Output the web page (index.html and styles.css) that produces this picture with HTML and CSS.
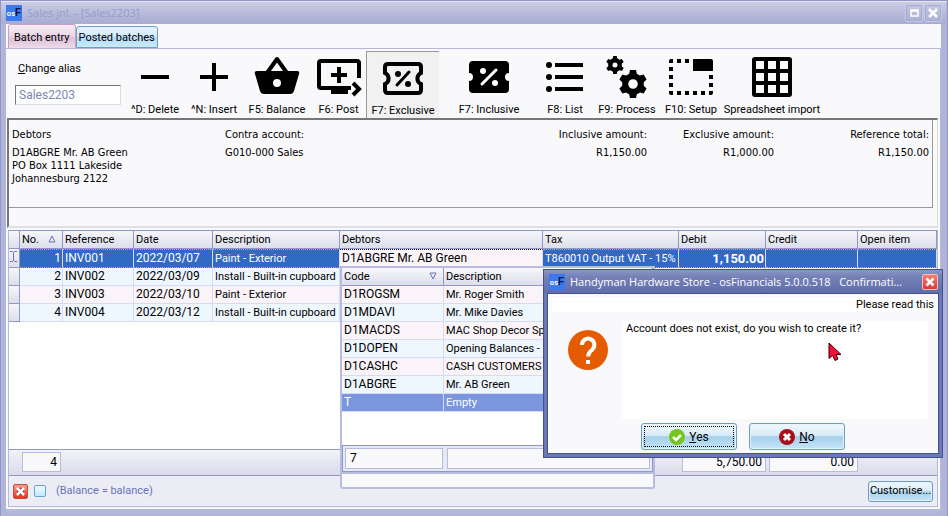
FILE: index.html
```html
<!DOCTYPE html>
<html lang="en">
<head>
<meta charset="utf-8">
<title>Sales jnl. - [Sales2203]</title>
<link rel="stylesheet" href="styles.css">
</head>
<body>
<div class="window">
  <header class="titlebar">
    <span class="logo" aria-hidden="true">os<b>F</b></span>
    <h1 class="title">Sales jnl. - [Sales2203]</h1>
    <button class="winbtn" type="button" aria-label="Maximise"><svg width="16" height="16"><path d="M5 5h7v6H5zM5 6h7" fill="none" stroke="#fff" stroke-width="1.500"/></svg></button>
    <button class="winbtn" type="button" aria-label="Close"><svg width="16" height="16"><path d="M4 4l8 8M12 4l-8 8" stroke="#fff" stroke-width="2.500"/></svg></button>
  </header>
  <nav class="tabs">
    <button class="tab tab-active" type="button">Batch entry</button>
    <button class="tab" type="button">Posted batches</button>
  </nav>
  <main class="sheet">
    <div class="toolbar">
      <div class="alias">
        <label for="alias"><u>C</u>hange alias</label>
        <input id="alias" type="text" value="Sales2203">
      </div>
      <button class="tool w-delete" type="button"><svg width="48" height="42"><path d="M10 19h28v4H10z"/></svg>^D: Delete</button>
      <button class="tool w-insert" type="button"><svg width="48" height="42"><path d="M10 19h28v4H10zM22 7h4v28h-4z"/></svg>^N: Insert</button>
      <button class="tool w-balance" type="button"><svg width="48" height="42"><path d="M14 17L24 3l10 14" fill="none" stroke="#000" stroke-width="4" stroke-linejoin="round"/><path fill-rule="evenodd" d="M4 15h40q3 0 2 3l-5 17q-1 3-4 3H11q-3 0-4-3L2 18q-1-3 2-3zM24 23a4 4 0 1 0 0 8a4 4 0 0 0 0-8z"/></svg>F5: Balance</button>
      <button class="tool w-post" type="button"><svg width="48" height="42"><path d="M44 22V7q0-2-2-2H6q-2 0-2 2v23q0 2 2 2h30M24 11v16M16 19h16" fill="none" stroke="#000" stroke-width="4"/><path d="M16 32h17v6H16z"/><path d="M38 27l6 6-6 6" fill="none" stroke="#000" stroke-width="4"/></svg>F6: Post</button>
      <button class="tool tool-on w-exclusive" type="button"><svg width="48" height="42"><path d="M9 7h30q3 0 3 3v6a6 6 0 0 0 0 11v6q0 3-3 3H9q-3 0-3-3v-6a6 6 0 0 0 0-11v-6q0-3 3-3z" fill="none" stroke="#000" stroke-width="4"/><circle cx="19" cy="17" r="3"/><circle cx="29" cy="27" r="3"/><path d="M30 15L18 28" stroke="#000" stroke-width="3" stroke-linecap="round"/></svg>F7: Exclusive</button>
      <button class="tool w-inclusive" type="button"><svg width="48" height="42"><path d="M8 5h32q4 0 4 4v8a4 4 0 0 0 0 8v8q0 4-4 4H8q-4 0-4-4v-8a4 4 0 0 0 0-8V9q0-4 4-4z"/><circle cx="18" cy="15" r="3" fill="#fff"/><circle cx="30" cy="27" r="3" fill="#fff"/><path d="M31 14L17 28" stroke="#fff" stroke-width="3" stroke-linecap="round"/></svg>F7: Inclusive</button>
      <button class="tool w-list" type="button"><svg width="48" height="42"><circle cx="8" cy="9" r="3"/><circle cx="8" cy="21" r="3"/><circle cx="8" cy="33" r="3"/><path d="M14 7h28v4H14zM14 19h28v4H14zM14 31h28v4H14z"/></svg>F8: List</button>
      <button class="tool w-process" type="button"><svg width="48" height="42">
        <g transform="translate(12 9)"><circle r="4.700" fill="none" stroke="#000" stroke-width="4.400"/><path d="M-2.200-6l.4-3h3.600l.4 3zM-2.200 6l.4 3h3.600l.4-3z"/><path transform="rotate(60)" d="M-2.200-6l.4-3h3.600l.4 3zM-2.200 6l.4 3h3.600l.4-3z"/><path transform="rotate(120)" d="M-2.200-6l.4-3h3.600l.4 3zM-2.200 6l.4 3h3.600l.4-3z"/></g>
        <g transform="translate(30 28)"><circle r="7.800" fill="none" stroke="#000" stroke-width="6"/><path d="M-4-9.500l1-4.500h6l1 4.500zM-4 9.500l1 4.500h6l1-4.500z"/><path transform="rotate(60)" d="M-4-9.500l1-4.500h6l1 4.500zM-4 9.500l1 4.500h6l1-4.500z"/><path transform="rotate(120)" d="M-4-9.500l1-4.500h6l1 4.500zM-4 9.500l1 4.500h6l1-4.500z"/></g></svg>F9: Process</button>
      <button class="tool w-setup" type="button"><svg width="48" height="42"><path d="M2 5q0-2 2-2h2v4H2zM10 3h4v4h-4zM18 3h4v4h-4zM26 3h18q2 0 2 2v10H26zM2 11h4v4H2zM2 19h4v4H2zM2 27h4v4H2zM42 19h4v4h-4zM42 27h4v4h-4zM2 35h4v4H4q-2 0-2-2zM10 35h4v4h-4zM18 35h4v4h-4zM26 35h4v4h-4zM34 35h4v4h-4zM42 35h4v2q0 2-2 2h-2z"/></svg>F10: Setup</button>
      <button class="tool w-import" type="button"><svg width="48" height="42"><path fill-rule="evenodd" d="M7 1h34q3 0 3 3v34q0 3-3 3H7q-3 0-3-3V4q0-3 3-3zM8 5v8h8V5zM20 5v8h8V5zM32 5v8h8V5zM8 17v8h8v-8zM20 17v8h8v-8zM32 17v8h8v-8zM8 29v8h8v-8zM20 29v8h8v-8zM32 29v8h8v-8z"/></svg>Spreadsheet import</button>
    </div>

    <section class="summary">
      <div class="summary-in">
        <div class="who">
          <p class="cap">Debtors</p>
          <p>D1ABGRE Mr. AB Green<br>PO Box 1111 Lakeside<br>Johannesburg 2122</p>
        </div>
        <div class="contra"><p class="cap">Contra account:</p><p>G010-000 Sales</p></div>
        <div class="amount"><p class="cap">Inclusive amount:</p><p>R1,150.00</p></div>
        <div class="amount excl"><p class="cap">Exclusive amount:</p><p>R1,000.00</p></div>
        <div class="amount ref"><p class="cap">Reference total:</p><p>R1,150.00</p></div>
      </div>
    </section>

    <section class="batch">
      <div class="gridwrap">
        <table class="grid">
          <colgroup><col class="c-ind"><col class="c-no"><col class="c-ref"><col class="c-date"><col class="c-desc"><col class="c-debt"><col class="c-tax"><col class="c-debit"><col class="c-credit"><col></colgroup>
          <thead><tr><th></th><th>No. <svg class="sort" width="8" height="8"><path d="M4 1L7 7H1z" fill="none" stroke="#6674b4"/></svg></th><th>Reference</th><th>Date</th><th>Description</th><th>Debtors</th><th>Tax</th><th>Debit</th><th>Credit</th><th>Open item</th></tr></thead>
          <tbody>
            <tr class="current"><th class="cursor"><svg width="7" height="11"><path d="M0 .5h2.500l1 1 1-1H7M3.500 1v9M0 10.500h2.500l1-1 1 1H7" fill="none" stroke="#6674b4"/></svg></th><td class="num">1</td><td class="code">INV001</td><td class="code">2022/03/07</td><td>Paint - Exterior</td><td class="edit"><input type="text" aria-label="Debtors" value="D1ABGRE Mr. AB Green"></td><td>T860010 Output VAT - 15%</td><td class="num strong">1,150.00</td><td></td><td></td></tr>
            <tr class="blue"><th></th><td class="num">2</td><td class="code">INV002</td><td class="code">2022/03/09</td><td>Install - Built-in cupboard</td><td></td><td></td><td></td><td></td><td></td></tr>
            <tr class="pink"><th></th><td class="num">3</td><td class="code">INV003</td><td class="code">2022/03/10</td><td>Paint - Exterior</td><td></td><td></td><td></td><td></td><td></td></tr>
            <tr class="blue"><th></th><td class="num">4</td><td class="code">INV004</td><td class="code">2022/03/12</td><td>Install - Built-in cupboard</td><td></td><td></td><td></td><td></td><td></td></tr>
          </tbody>
        </table>
        <div class="lookup">
          <div class="lookup-main">
            <table class="grid picks">
              <colgroup><col class="c-code"><col></colgroup>
              <thead><tr><th>Code <svg class="sort" width="8" height="8"><path d="M1 1H7L4 7z" fill="none" stroke="#6674b4"/></svg></th><th>Description</th></tr></thead>
              <tbody>
                <tr class="pink"><td class="code">D1ROGSM</td><td>Mr. Roger Smith</td></tr>
                <tr class="blue"><td class="code">D1MDAVI</td><td>Mr. Mike Davies</td></tr>
                <tr class="pink"><td class="code">D1MACDS</td><td>MAC Shop Decor Sp</td></tr>
                <tr class="blue"><td class="code">D1DOPEN</td><td>Opening Balances -</td></tr>
                <tr class="pink"><td class="code">D1CASHC</td><td>CASH CUSTOMERS</td></tr>
                <tr class="blue"><td class="code">D1ABGRE</td><td>Mr. AB Green</td></tr>
                <tr class="picked"><td class="code">T</td><td>Empty</td></tr>
              </tbody>
            </table>
            <div class="lookup-foot"><span class="box count">7</span><span class="box rest"></span></div>
          </div>
          <div class="lookup-pane"></div>
        </div>
      </div>
      <div class="totals"><span class="box t-no">4</span><span class="box t-debit">5,750.00</span><span class="box t-credit">0.00</span></div>
      <div class="status">
        <button class="clear" type="button" aria-label="Clear filter"><svg width="13" height="13"><path d="M4 4l5 5M9 4l-5 5" stroke="#8d3020" stroke-width="4"/><path d="M3 3l7 7M10 3l-7 7" stroke="#fff" stroke-width="2.500"/></svg></button>
        <input class="tick" id="filter" type="checkbox">
        <label for="filter">(Balance = balance)</label>
        <button class="glass customise" type="button">Customise...</button>
      </div>
    </section>
  </main>
</div>

<div class="dialog" role="dialog" aria-labelledby="dlg-title">
  <div class="dlg-bar">
    <span class="logo" aria-hidden="true">os<b>F</b></span>
    <h2 class="dlg-title" id="dlg-title">Handyman Hardware Store - osFinancials 5.0.0.518 &nbsp; Confirmati...</h2>
    <button class="dlg-close" type="button" aria-label="Close"><svg width="14" height="14"><path d="M3.500 3.500l7 7M10.500 3.500l-7 7" stroke="#fff" stroke-width="2.500"/></svg></button>
  </div>
  <div class="dlg-body">
    <p class="notice">Please read this</p>
    <div class="dlg-main">
      <svg class="question" width="40" height="40"><circle cx="20" cy="20" r="20" fill="#e55c00"/><path d="M14 15a6.200 6.200 0 1 1 10.500 4.300C22 22 20.200 22.500 20.200 26.500" fill="none" stroke="#fff" stroke-width="4"/><path d="M18 30h4v4h-4z" fill="#fff"/></svg>
      <p class="memo">Account does not exist, do you wish to create it?</p>
    </div>
    <div class="dlg-actions">
      <button class="glass focus" type="button"><svg width="16" height="16"><circle cx="8" cy="8" r="8" fill="#76c51c"/><path d="M4 8l3 3 5-5" fill="none" stroke="#fff" stroke-width="2.500"/></svg><span><u>Y</u>es</span></button>
      <button class="glass" type="button"><svg width="16" height="16"><circle cx="8" cy="8" r="8" fill="#a80f18"/><path d="M5 5l6 6M11 5l-6 6" stroke="#fff" stroke-width="3"/></svg><span><u>N</u>o</span></button>
    </div>
  </div>
</div>
<svg class="pointer" width="14" height="20"><path d="M1 1v15.500l3.500-3 2.500 5 3-1.500-2-4.500h5z" fill="#f5103c" stroke="#300" stroke-width="1"/></svg>
</body>
</html>
```
FILE: styles.css
```css
* { box-sizing: border-box; }
body { margin: 0; font: 11px/14px Roboto, "Liberation Sans", sans-serif; color: #000; }
button, input { font: inherit; color: inherit; margin: 0; padding: 0; border: 0; background: none; }
h1, h2, p { margin: 0; font-weight: normal; }
button svg { display: block; }

.window { display: flex; flex-direction: column; min-height: 100vh; padding: 0 6px 3px 5px; background: #b0b4d8; border: 1px solid #8f96c8; border-width: 1px 1px 0; box-shadow: inset 0 1px #e8eaf6; }
.titlebar { display: flex; align-items: center; height: 23px; gap: 3px; margin: 0 -5px; padding: 0 5px; background: linear-gradient(#cdd0e4, #c0c3dd 30%, #b0b4d6 75%, #a8acd2); box-shadow: inset 0 1px #e4e6f3; }
.title { flex: 1; margin-left: 2px; font: 11px/16px "Open Sans", sans-serif; color: #949cc8; }
.logo { flex: none; width: 16px; height: 16px; background: #3b79f0; color: #fff; font: bold 7px/16px "Liberation Sans", sans-serif; text-align: center; white-space: nowrap; overflow: hidden; }
.logo b { color: #0a1238; font-size: 10px; }
.winbtn { width: 16px; height: 16px; border-radius: 2px; box-shadow: inset 0 0 0 1px #a4aad4, 0 0 0 1px #c8cbe4; }

.tabs { display: flex; align-items: flex-end; height: 24px; padding-left: 2px; background: #f9f9fc; }
.tab { height: 22px; padding: 2px 2px 0; border: 1px solid #6a9fce; border-radius: 3px 3px 0 0; background: linear-gradient(#e6f4fd, #d2ebfb 45%, #b4dbf5 55%, #c8eafc); }
.tab-active { height: 24px; padding: 2px 5px 0; border-color: #c8a0c4; border-bottom: 0; background: linear-gradient(#f7edf5, #ead6e6 45%, #dcc0d8 60%, #ecdcea); }

.sheet { flex: 1; display: flex; flex-direction: column; padding: 1px 2px 2px 1px; background: #f9f9fc; border: 1px solid #b4b8da; border-width: 1px 1px 4px 0; }
.toolbar { display: flex; align-items: stretch; height: 68px; padding-top: 1px; }
.alias { display: flex; flex-direction: column; width: 118px; padding: 11px 0 0 8px; }
.alias label { padding-left: 3px; }
.alias input { width: 106px; height: 20px; margin-top: 9px; padding: 0 3px; background: #fff; border: 1px solid; border-color: #777 #ddd #ddd #777; color: #8088b4; font-size: 12px; }
.tool { display: flex; flex-direction: column; align-items: center; gap: 5px; padding-top: 5px; white-space: nowrap; }
.tool-on { border-left: 1px solid #999; border-top: 1px solid #999; background: #f1f1f2; }
.w-delete { width: 60px; } .w-insert { width: 58px; } .w-balance { width: 68px; } .w-post { width: 55px; }
.w-exclusive { width: 73px; } .w-inclusive { width: 100px; } .w-list { width: 52px; } .w-process { width: 72px; }
.w-setup { width: 56px; } .w-import { width: 106px; }

.summary { height: 110px; border: 2px solid #777; border-right: 1px solid #ddd; border-bottom: 2px solid #e0e0e4; font: 11px/13px "DejaVu Sans Condensed", sans-serif; }
.summary-in { display: flex; height: 88px; margin-right: 4px; padding: 8px 3px 0; border-bottom: 1px solid #999; border-right: 1px solid #999; }
.cap { margin-bottom: 5px; }
.who { width: 213px; }
.contra { width: 200px; }
.amount { flex: 1; text-align: right; }
.excl { flex: 0 0 127px; }
.ref { flex: 0 0 155px; }

.batch { flex: 1; display: flex; flex-direction: column; margin: 2px 0 0 1px; border: 1px solid #b4b8dc; border-top-color: #9098c8; background: #ececf5; }
.gridwrap { flex: 1; position: relative; background: #fff; }
.grid { width: 100%; border-collapse: separate; border-spacing: 0; table-layout: fixed; line-height: 17px; }
.grid th, .grid td { height: 18px; padding: 0 0 0 2px; overflow: hidden; white-space: nowrap; text-align: left; font-weight: normal; border-right: 1px solid #d6daf2; border-bottom: 1px solid #d6daf2; }
.grid th { background: linear-gradient(#f6f6fa, #dcdeea); border-color: #9098c8; }
.grid .cursor { padding-left: 1px; }
.grid .code { font-size: 12px; }
.grid .num { text-align: right; padding-right: 1px; font-size: 12px; }
.c-ind { width: 11px; } .c-no { width: 43px; } .c-ref { width: 71px; } .c-date { width: 79px; } .c-desc { width: 127px; }
.c-debt { width: 203px; } .c-tax { width: 136px; } .c-debit { width: 87px; } .c-credit { width: 92px; } .c-code { width: 102px; }
.sort { float: right; margin: 4px 6px 0 0; }
.blue td { background: #eef6fe; }
.pink td { background: #faf4f8; }
.current td { background: #316ac5; color: #fff; border-top: 1px dotted #e8a040; border-bottom: 1px dotted #e8a040; }
.grid .current .edit { padding: 0; background: #faf4f8; color: #000; border-top-color: #000; }
.edit input { display: block; width: 100%; height: 17px; padding-left: 2px; outline: 0; font-size: 12px; }
.grid .strong { font-weight: bold; font-size: 13px; }
.picked td { background: #7b96de; color: #fff; }

.lookup { position: absolute; left: 331px; top: 35px; width: 315px; }
.lookup-main { display: flex; flex-direction: column; height: 208px; border: 2px solid #b8bcdf; background: #fff; }
.lookup-foot { display: flex; gap: 4px; margin-top: auto; height: 27px; padding: 2px; border: 1px solid #9098c8; background: #e6e8f2; }
.box { border: 1px solid #b8bcdc; background: #f9f9fc; font-size: 12px; line-height: 19px; }
.count { width: 98px; padding-left: 4px; }
.rest { flex: 1; }
.lookup-pane { height: 15px; border: 2px solid #b8bcdf; border-top: 0; border-radius: 0 0 3px 3px; background: #f9f9fc; }

.totals { display: flex; height: 27px; padding: 2px 0 3px 13px; border: 1px solid #9098c8; border-width: 1px 0; background: linear-gradient(#f2f2f8, #d9dbea); }
.totals .box { padding-right: 3px; text-align: right; }
.t-no { width: 39px; }
.totals .t-debit { width: 84px; margin-left: 621px; }
.totals .t-credit { width: 89px; margin-left: 3px; }
.status { display: flex; align-items: center; height: 30px; padding: 0 4px; color: #6a74b8; }
.clear { width: 15px; height: 15px; border: 1px solid #c05040; border-radius: 2px; background: linear-gradient(#f8a090, #e83020); }
.tick { appearance: none; width: 12px; height: 12px; margin: 0 10px 0 6px; border: 1px solid #6aa4d0; border-radius: 2px; background: linear-gradient(#f4fbff, #c0e8fc); }
.glass { border: 1px solid #6a9cc8; border-radius: 3px; color: #000; background: linear-gradient(#f2f8fc, #d8ebf7 45%, #a4cfea 52%, #c6e6f8); box-shadow: inset 0 0 0 1px #e4f4fc; }
.customise { width: 65px; height: 21px; margin-left: auto; }

.dialog { position: absolute; left: 543px; top: 269px; width: 400px; padding: 1px 3px 3px; background: #6a78b4; border: 1px solid #45528f; }
.dlg-bar { display: flex; align-items: center; height: 23px; gap: 5px; margin: -1px -3px 0; padding: 0 4px 0 5px; background: linear-gradient(#8a96c4, #7481b6 30%, #606dac); }
.dlg-title { flex: 1; font: 11px/16px "Open Sans", sans-serif; color: #fff; white-space: nowrap; }
.dlg-close { width: 16px; height: 16px; border: 1px solid #f4c0c0; border-radius: 2px; background: linear-gradient(#f08070, #e03838); }
.dlg-body { padding: 4px 4px 3px; background: #f9f9fc; border: 1px solid #45528f; }
.notice { height: 14px; background: #fff; text-align: right; }
.dlg-main { display: flex; margin: 9px 6px 4px 16px; gap: 14px; }
.question { margin-top: 9px; }
.memo { flex: 1; height: 98px; padding: 1px 4px; background: #fff; }
.dlg-actions { display: flex; gap: 12px; padding-left: 89px; }
.dlg-actions .glass { display: flex; align-items: center; justify-content: center; gap: 4px; width: 96px; height: 27px; font-size: 12px; }
.dlg-actions .focus { outline: 1px dotted #000; outline-offset: -4px; }
.pointer { position: absolute; left: 828px; top: 342px; }
```
